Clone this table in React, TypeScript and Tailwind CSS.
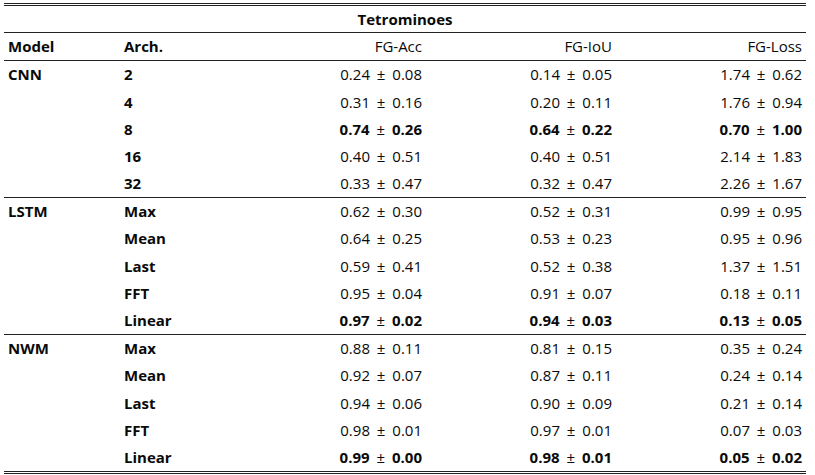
import React from 'react';

type Row = {
  arch: string;
  acc: [string, string];
  iou: [string, string];
  loss: [string, string];
  best?: boolean;
};

type Group = {
  model: string;
  rows: Row[];
};

const groups: Group[] = [
  {
    model: 'CNN',
    rows: [
      { arch: '2', acc: ['0.24', '0.08'], iou: ['0.14', '0.05'], loss: ['1.74', '0.62'] },
      { arch: '4', acc: ['0.31', '0.16'], iou: ['0.20', '0.11'], loss: ['1.76', '0.94'] },
      { arch: '8', acc: ['0.74', '0.26'], iou: ['0.64', '0.22'], loss: ['0.70', '1.00'], best: true },
      { arch: '16', acc: ['0.40', '0.51'], iou: ['0.40', '0.51'], loss: ['2.14', '1.83'] },
      { arch: '32', acc: ['0.33', '0.47'], iou: ['0.32', '0.47'], loss: ['2.26', '1.67'] },
    ],
  },
  {
    model: 'LSTM',
    rows: [
      { arch: 'Max', acc: ['0.62', '0.30'], iou: ['0.52', '0.31'], loss: ['0.99', '0.95'] },
      { arch: 'Mean', acc: ['0.64', '0.25'], iou: ['0.53', '0.23'], loss: ['0.95', '0.96'] },
      { arch: 'Last', acc: ['0.59', '0.41'], iou: ['0.52', '0.38'], loss: ['1.37', '1.51'] },
      { arch: 'FFT', acc: ['0.95', '0.04'], iou: ['0.91', '0.07'], loss: ['0.18', '0.11'] },
      { arch: 'Linear', acc: ['0.97', '0.02'], iou: ['0.94', '0.03'], loss: ['0.13', '0.05'], best: true },
    ],
  },
  {
    model: 'NWM',
    rows: [
      { arch: 'Max', acc: ['0.88', '0.11'], iou: ['0.81', '0.15'], loss: ['0.35', '0.24'] },
      { arch: 'Mean', acc: ['0.92', '0.07'], iou: ['0.87', '0.11'], loss: ['0.24', '0.14'] },
      { arch: 'Last', acc: ['0.94', '0.06'], iou: ['0.90', '0.09'], loss: ['0.21', '0.14'] },
      { arch: 'FFT', acc: ['0.98', '0.01'], iou: ['0.97', '0.01'], loss: ['0.07', '0.03'] },
      { arch: 'Linear', acc: ['0.99', '0.00'], iou: ['0.98', '0.01'], loss: ['0.05', '0.02'], best: true },
    ],
  },
];

const Value: React.FC<{ v: [string, string]; best?: boolean }> = ({ v, best }) => (
  <div className="w-[190px] pr-[4px] text-right">
    <span className={best ? 'font-bold' : ''}>{v[0]}</span>
    <span className="mx-[3px]"> ± </span>
    <span className={best ? 'font-bold' : ''}>{v[1]}</span>
  </div>
);

export default function App() {
  return (
    <div
      className="w-[815px] h-[475px] bg-white pt-[3px] pl-[4px] text-[15px] text-[#0a0a0a]"
      style={{ fontFamily: '"Open Sans", "Noto Sans", sans-serif' }}
    >
      <div className="w-[802px] border-t-[3px] border-b-[3px] border-double border-[#222]">
        {/* Title */}
        <div className="h-[27px] flex items-center justify-center font-bold border-b border-[#222]">
          Tetrominoes
        </div>

        {/* Header */}
        <div className="h-[28px] flex items-center border-b border-[#222]">
          <div className="w-[116px] pl-[4px] font-bold">Model</div>
          <div className="w-[116px] pl-[4px] font-bold">Arch.</div>
          <div className="w-[190px] pr-[4px] text-right">FG-Acc</div>
          <div className="w-[190px] pr-[4px] text-right">FG-IoU</div>
          <div className="w-[190px] pr-[4px] text-right">FG-Loss</div>
        </div>

        {groups.map((g, gi) => (
          <div key={g.model} className={gi < groups.length - 1 ? 'border-b border-[#222]' : ''}>
            {g.rows.map((r, ri) => (
              <div key={r.arch} className="h-[27.2px] flex items-center">
                <div className="w-[116px] pl-[4px] font-bold">{ri === 0 ? g.model : ''}</div>
                <div className="w-[116px] pl-[4px] font-bold">{r.arch}</div>
                <Value v={r.acc} best={r.best} />
                <Value v={r.iou} best={r.best} />
                <Value v={r.loss} best={r.best} />
              </div>
            ))}
          </div>
        ))}
      </div>
    </div>
  );
}
